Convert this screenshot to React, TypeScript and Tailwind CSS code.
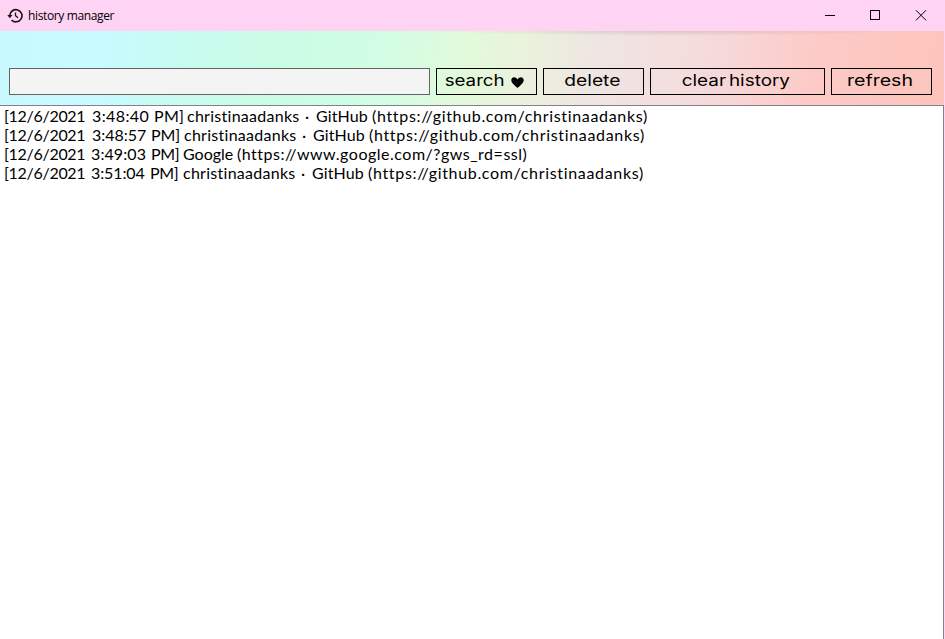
import React from "react";

type Word = { text: string; cls: string };

const url = "(https://github.com/christinaadanks)";

const rows: Word[][] = [
  [
    { text: "[12/6/2021", cls: "w-[88px] tracking-[-0.3px]" },
    { text: "3:48:40", cls: "w-[62px] tracking-[0.4px]" },
    { text: "PM]", cls: "w-[33px] tracking-[0.3px]" },
    { text: "christinaadanks", cls: "w-[118px] tracking-[0.27px]" },
    { text: "·", cls: "w-[11px]" },
    { text: "GitHub", cls: "w-[56px] tracking-[0.1px]" },
    { text: url, cls: "tracking-[0.67px]" },
  ],
  [
    { text: "[12/6/2021", cls: "w-[88px] tracking-[-0.3px]" },
    { text: "3:48:57", cls: "w-[59px] tracking-[0px]" },
    { text: "PM]", cls: "w-[33px] tracking-[-0.1px]" },
    { text: "christinaadanks", cls: "w-[118px] tracking-[0.27px]" },
    { text: "·", cls: "w-[11px]" },
    { text: "GitHub", cls: "w-[56px] tracking-[0.1px]" },
    { text: url, cls: "tracking-[0.67px]" },
  ],
  [
    { text: "[12/6/2021", cls: "w-[87px] tracking-[-0.3px]" },
    { text: "3:49:03", cls: "w-[60px] tracking-[0.1px]" },
    { text: "PM]", cls: "w-[32px] tracking-[-0.4px]" },
    { text: "Google", cls: "w-[54px] tracking-[0px]" },
    { text: "(https://www.google.com/?gws_rd=ssl)", cls: "tracking-[0.51px]" },
  ],
  [
    { text: "[12/6/2021", cls: "w-[87px] tracking-[-0.3px]" },
    { text: "3:51:04", cls: "w-[59px] tracking-[-0.1px]" },
    { text: "PM]", cls: "w-[33px] tracking-[-0.4px]" },
    { text: "christinaadanks", cls: "w-[118px] tracking-[0.27px]" },
    { text: "·", cls: "w-[11px]" },
    { text: "GitHub", cls: "w-[56px] tracking-[0.1px]" },
    { text: url, cls: "tracking-[0.67px]" },
  ],
];

function HistoryIcon() {
  return (
    <svg className="h-4 w-4" viewBox="0 0 16 16" fill="none" stroke="#1b1418" strokeWidth="1.6">
      <path d="M2.8 7.4A6.1 6.1 0 1 1 4.6 12.1" />
      <path d="M.3 7H5.5L2.8 10.2Z" fill="#1b1418" stroke="none" />
      <path d="M8.5 4.4V7.8L11 9.8" strokeWidth="1.3" />
    </svg>
  );
}

function Button({ label, cls, textCls, children }: { label: string; cls: string; textCls: string; children?: React.ReactNode }) {
  return (
    <button className={"flex h-[27px] shrink-0 items-start justify-center border border-black pt-px " + cls}>
      <span className={"block origin-center text-[16px] leading-[20px] font-normal whitespace-pre " + textCls}>{label}</span>
      {children}
    </button>
  );
}

export default function App() {
  return (
    <div className="flex h-[639px] w-[945px] flex-col overflow-hidden bg-[#ffd3f3] pr-px text-black">
      <header className="flex h-[31px] shrink-0 items-center pl-[7px]">
        <HistoryIcon />
        <span className="ml-[5px] pt-px font-['Open_Sans',sans-serif] text-[12px] leading-4 tracking-[-0.37px]">history manager</span>
        <svg className="ml-auto h-[31px] w-[120px]" viewBox="0 0 120 31" fill="none" stroke="#000">
          <path d="M1 15.5H11" shapeRendering="crispEdges" />
          <rect x="46.5" y="10.5" width="9" height="9" shapeRendering="crispEdges" />
          <path d="M92 10.3L102 20.3M102 10.3L92 20.3" />
        </svg>
      </header>
      <div className="flex h-[74px] shrink-0 items-start bg-[radial-gradient(ellipse_at_top,rgba(90,60,60,0.15),transparent_70%),linear-gradient(100deg,#c8f9ff_0%,#c8faff_11%,#c8fbf0_19%,#cafce5_29%,#d2fde4_41%,#e2fada_49%,#eaf2dc_55%,#efe5e2_63%,#f5dbdc_74%,#fdcac6_86%,#fcc4bb_100%)] bg-[size:480px_5px,100%_100%] bg-[position:430px_0,0_0] bg-no-repeat pt-[37px] pl-[9px] font-[Inter,sans-serif]">
        <input className="mr-[6px] h-[27px] w-[421px] shrink-0 border border-[#646464] bg-[#f4f4f4] outline-none" />
        <Button label="search" cls="mr-[6px] w-[101px] gap-[11px]" textCls="scale-x-[1.17]">
          <svg className="mt-[7px] h-[11px] w-[13px]" viewBox="0 0 13 11" fill="#000">
            <path d="M6.5 11C4.6 8.9 .3 6.5 .3 3.2C.3 1.5 1.6 .3 3.2 .3C4.8 .3 6 1.3 6.5 2.6C7 1.3 8.2 .3 9.8 .3C11.4 .3 12.7 1.5 12.7 3.2C12.7 6.5 8.4 8.9 6.5 11Z" />
          </svg>
        </Button>
        <Button label="delete" cls="mr-[6px] w-[101px] pr-[2px]" textCls="scale-x-[1.2]" />
        <Button label="clear history" cls="mr-[6px] w-[175px] pr-[4px]" textCls="scale-x-[1.18] [word-spacing:-2px]" />
        <Button label="refresh" cls="w-[101px] pr-[3px]" textCls="scale-x-[1.22]" />
      </div>
      <main className="min-h-0 flex-1 border-t border-r border-[#82808f] bg-white pl-1 font-[Lato,sans-serif] text-[16px] leading-[19px]">
        {rows.map((row, i) => (
          <div key={i} className="flex h-[19px] whitespace-pre">
            {row.map((w, j) => (
              <span key={j} className={"shrink-0 " + w.cls}>{w.text}</span>
            ))}
          </div>
        ))}
      </main>
    </div>
  );
}
